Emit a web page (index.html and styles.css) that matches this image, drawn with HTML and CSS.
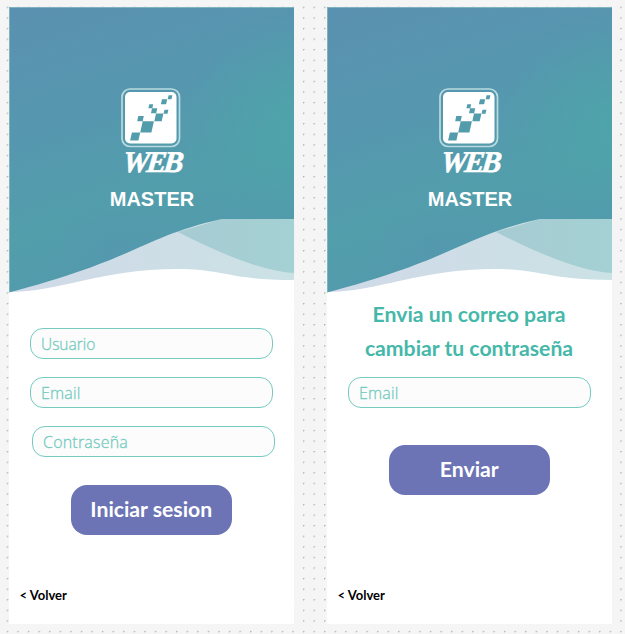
FILE: index.html
```html
<!DOCTYPE html>
<html lang="es">
<head>
<meta charset="utf-8">
<title>Web Master</title>
<link rel="stylesheet" href="styles.css">
</head>
<body>
<svg class="defs" width="0" height="0" aria-hidden="true">
  <defs>
    <linearGradient id="sea" gradientUnits="userSpaceOnUse" x1="30" y1="0" x2="118" y2="270">
      <stop offset="0" stop-color="#5a91b0"/>
      <stop offset=".4" stop-color="#5697af"/>
      <stop offset=".75" stop-color="#529eab"/>
      <stop offset="1" stop-color="#539aad"/>
    </linearGradient>
    <radialGradient id="glow" gradientUnits="userSpaceOnUse" cx="285" cy="118" r="110">
      <stop offset="0" stop-color="#4da5a9" stop-opacity=".8"/>
      <stop offset="1" stop-color="#4da5a9" stop-opacity="0"/>
    </radialGradient>
    <radialGradient id="shade" gradientUnits="userSpaceOnUse" cx="110" cy="250" r="70">
      <stop offset="0" stop-color="#5596af" stop-opacity=".6"/>
      <stop offset="1" stop-color="#5596af" stop-opacity="0"/>
    </radialGradient>
    <linearGradient id="mist">
      <stop offset="0" stop-color="#d0d9e8"/>
      <stop offset="1" stop-color="#cbe2e5"/>
    </linearGradient>
    <linearGradient id="foam">
      <stop offset="0" stop-color="#a7cbd3"/>
      <stop offset="1" stop-color="#a4d1d3"/>
    </linearGradient>
    <symbol id="waves" viewBox="0 0 285 286">
      <path fill="url(#mist)" d="M0 285C48 285 95 262 168 262C215 262 220 273 285 273V212H180Z"/>
      <path fill="url(#foam)" d="M169 225Q245 264 285 266V212H213Z"/>
      <path fill="url(#sea)" d="M0 0H285V212H213C135 229 128 252 0 285.500Z"/>
      <path fill="url(#glow)" d="M130 0H285V212H213L130 236Z"/>
      <path fill="url(#shade)" d="M0 150H285V212H213C135 229 128 252 0 285.500Z"/>
      <path fill="none" stroke="#8fc0c8" stroke-opacity=".7" d="M.5 285V.5H285"/>
    </symbol>
    <symbol id="mark" viewBox="0 0 60 60">
      <rect x="1" y="1" width="57.500" height="57.500" rx="8" fill="none" stroke="#b9dbe0" stroke-width="1.700"/>
      <rect x="4" y="4" width="51.500" height="51.500" rx="5" fill="#fff"/>
      <g fill="#539cac">
        <path d="M47.600 7.200h3.800l-.9 4h-3.800zM41 11.300h5.200l-1.100 5h-5.200zM28.300 16.200h3.900l-.9 4h-3.900zM31 20.300h5.200l-1 5H30zM43.500 21.800h3.900l-.9 4h-3.900zM35 25.500h7.400l-1.700 7.800h-7.400zM17.300 28h5.500l-1.100 5.300h-5.500zM21.700 33.300h11.200l-2.500 11.200H19.200zM10.900 44.500h8.300l-1.800 8H9.100z"/>
      </g>
    </symbol>
  </defs>
</svg>
<main class="board">
  <section class="screen">
    <header class="hero">
      <svg class="waves"><use href="#waves"/></svg>
      <div class="brand">
        <svg class="mark"><use href="#mark"/></svg>
        <span class="web">WEB</span>
        <span class="master">MASTER</span>
      </div>
    </header>
    <form class="form form-login">
      <div class="field field-user">Usuario</div>
      <div class="field">Email</div>
      <div class="field field-offset">Contraseña</div>
      <button class="button" type="button">Iniciar sesion</button>
    </form>
    <a class="back">&lt; Volver</a>
  </section>
  <section class="screen">
    <header class="hero">
      <svg class="waves"><use href="#waves"/></svg>
      <div class="brand">
        <svg class="mark"><use href="#mark"/></svg>
        <span class="web">WEB</span>
        <span class="master">MASTER</span>
      </div>
    </header>
    <form class="form form-reset">
      <h1 class="title">Envia un correo para<br>cambiar tu contraseña</h1>
      <div class="field">Email</div>
      <button class="button" type="button">Enviar</button>
    </form>
    <a class="back">&lt; Volver</a>
  </section>
</main>
</body>
</html>
```
FILE: styles.css
```css
* { box-sizing: border-box; }

body {
  margin: 0;
  height: 634px;
  overflow: hidden;
  background: #f5f5f5 radial-gradient(circle at 7.5px 7.5px, #a4a4a4 0, #b4b4b4 .6px, transparent .9px) 0 0 / 10.590px 10.590px;
  font-family: Lato, sans-serif;
}

.defs { position: absolute; }

.board {
  display: flex;
  gap: 33px;
  padding: 7px 9px;
}

.screen {
  display: flex;
  flex-direction: column;
  flex: none;
  width: 285px;
  height: 617px;
  background: #fff;
}

.hero {
  display: grid;
  height: 286px;
}

.waves,
.brand { grid-area: 1 / 1; }

.waves { width: 285px; height: 286px; }

.brand {
  display: flex;
  flex-direction: column;
  align-items: center;
  padding-top: 80.500px;
  color: #fff;
}

.mark { width: 60px; height: 60px; margin-right: 1px; }

.web {
  height: 29px;
  font: italic bold 30px/27px "Liberation Serif", serif;
  letter-spacing: -3px;
  transform: skewX(-6deg);
  -webkit-text-stroke: .6px #fff;
}

.master {
  margin: 10px 0 0 1px;
  font: bold 20px/24px "Liberation Sans", sans-serif;
}

.form {
  display: flex;
  flex-direction: column;
  align-items: flex-start;
  padding-left: 20.500px;
}

.form-login { padding-top: 35px; }

.field {
  width: 243.500px;
  height: 31px;
  margin-bottom: 18px;
  padding-left: 10.500px;
  border: 1px solid #75cbc0;
  border-radius: 13px;
  background: #fcfcfc;
  color: #75cbc0;
  font: 300 16px/30px "Open Sans", sans-serif;
  letter-spacing: .2px;
  -webkit-text-stroke: .3px #75cbc0;
}

.field-user { font-size: 15.500px; letter-spacing: 0; }

.field-offset { margin-left: 2px; }

.button {
  width: 160.500px;
  height: 50px;
  margin: 10.500px 0 0 41.500px;
  padding: 0 0 2px;
  border: 0;
  border-radius: 16px;
  background: #6c74b5;
  color: #fff;
  font: bold 21.200px/48px Lato, sans-serif;
}

.form-login .button { margin-top: 10px; }

.title {
  width: 243px;
  margin: 4px 0 12px;
  color: #45b8a9;
  font: bold 21.200px/34px Lato, sans-serif;
  text-align: center;
}

.form-reset .button { margin-top: 19px; }

.back {
  margin: auto 0 20px 10.500px;
  color: #000;
  font: bold 13px/18px Lato, sans-serif;
}
```
